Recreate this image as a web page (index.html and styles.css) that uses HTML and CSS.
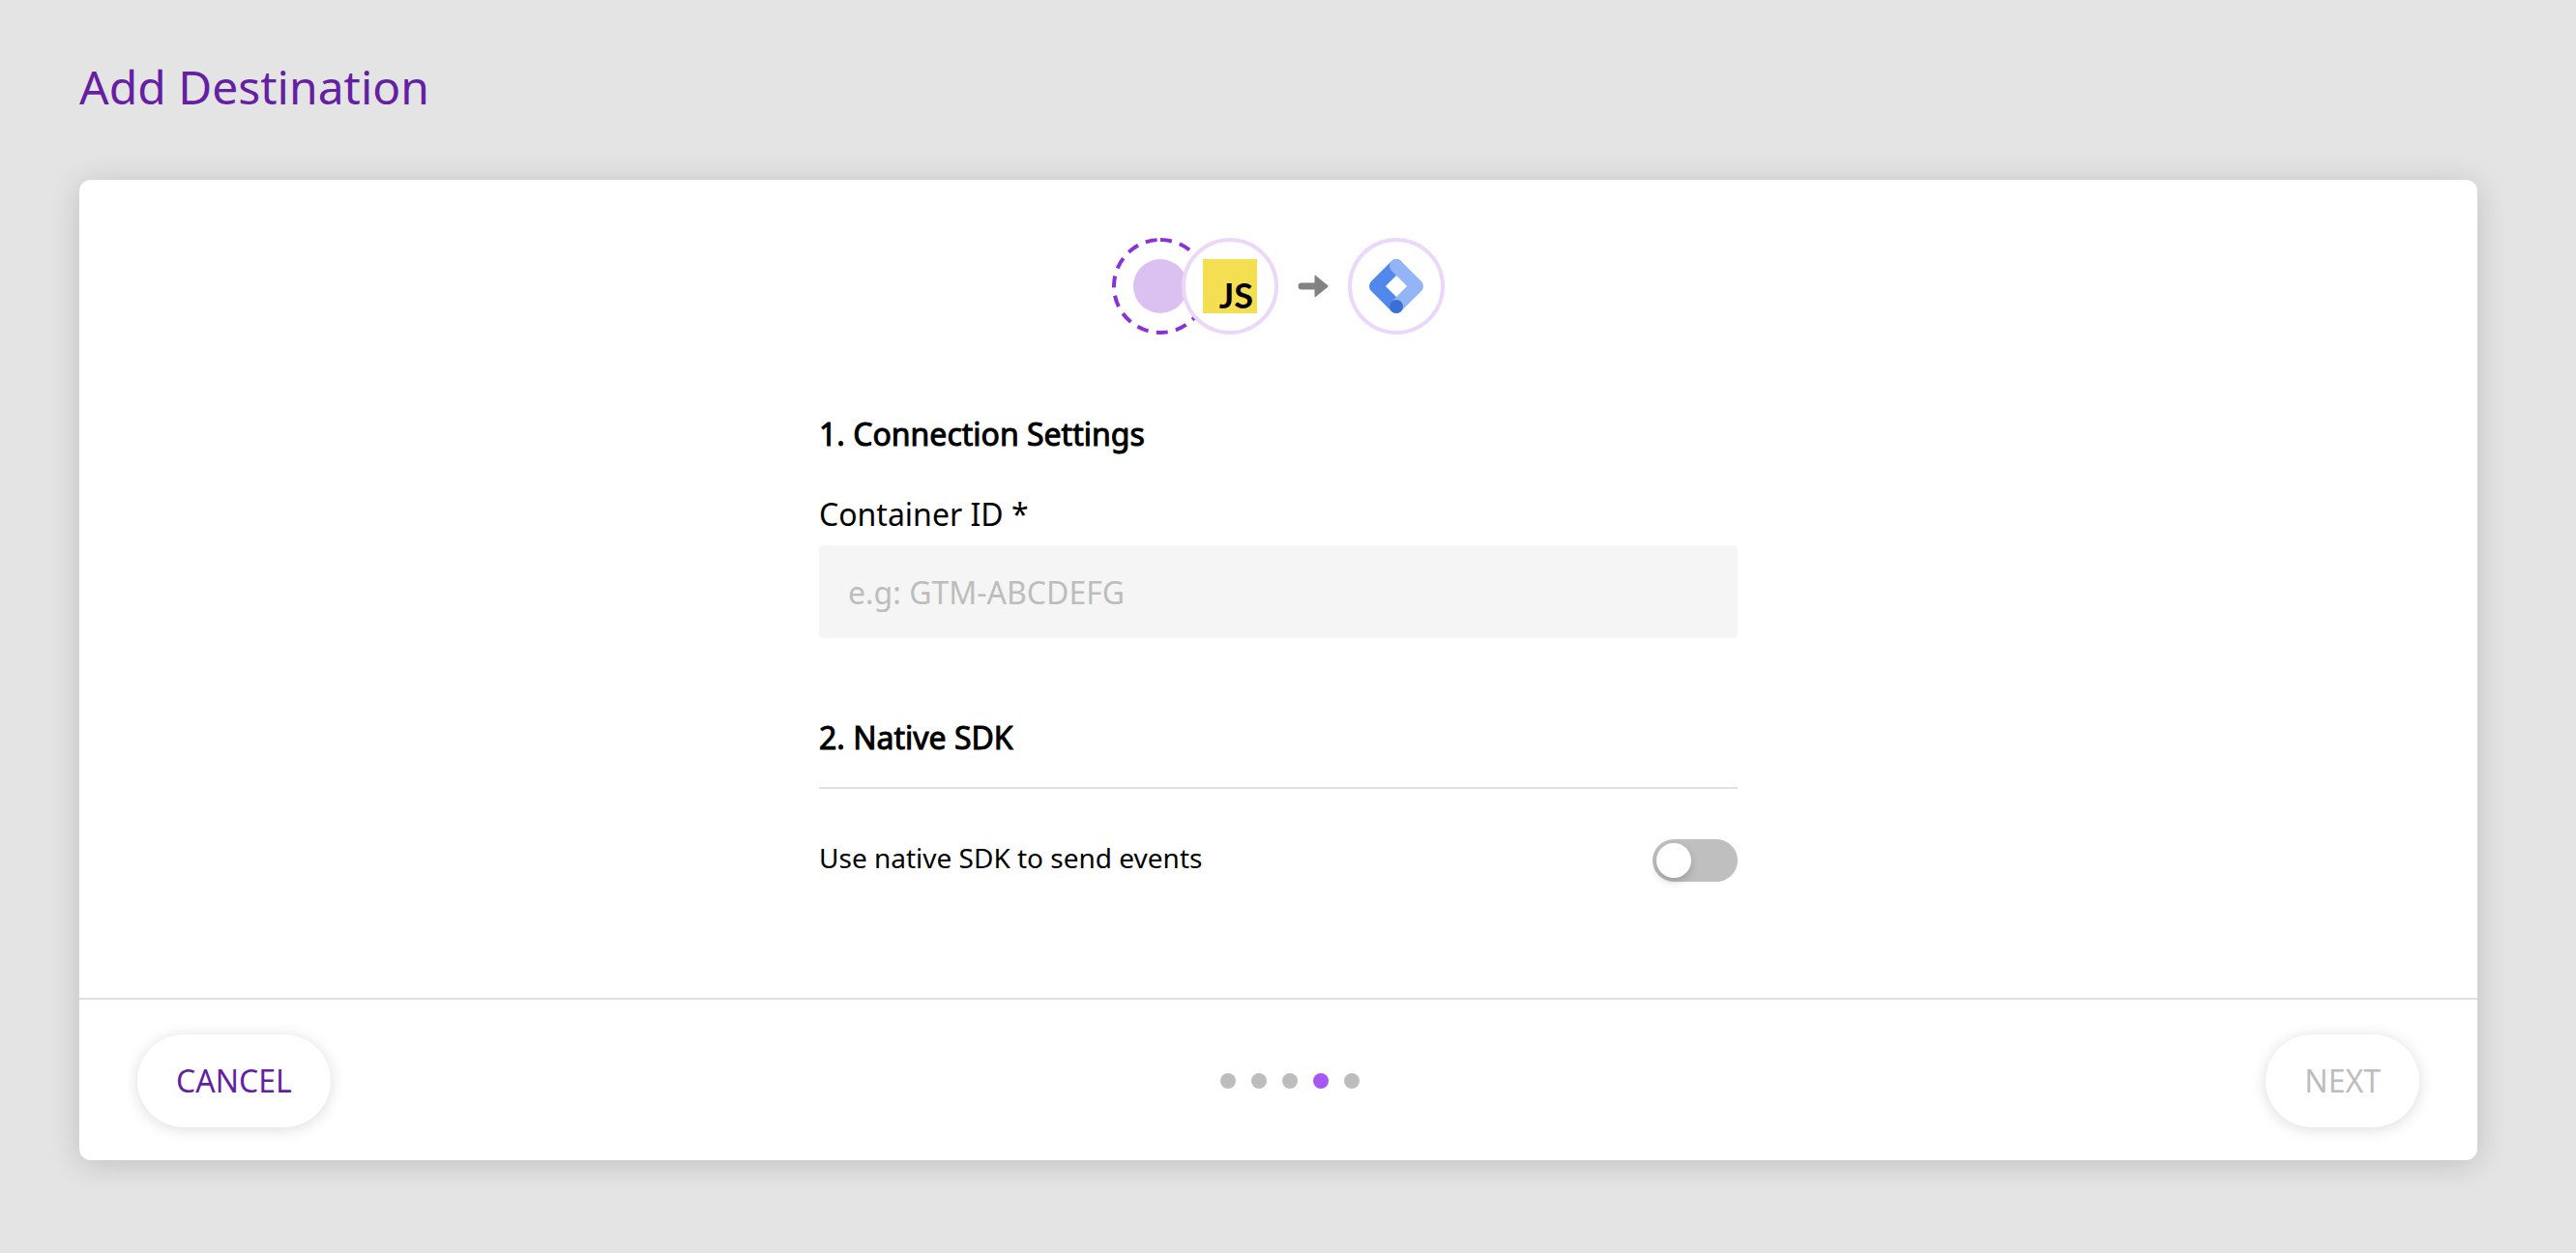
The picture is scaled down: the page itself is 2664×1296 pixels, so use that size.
FILE: index.html
```html
<!DOCTYPE html>
<html lang="en">
<head>
<meta charset="utf-8">
<meta name="viewport" content="width=device-width, initial-scale=1">
<title>Add Destination</title>
<link rel="stylesheet" href="styles.css">
</head>
<body>
<main class="page">
  <h1 class="page-title">Add Destination</h1>
  <form class="card">
    <div class="card-body">
      <div class="flow">
        <svg class="badge-pending" viewBox="0 0 100 100" aria-hidden="true">
          <circle cx="50" cy="50" r="48" fill="none" stroke="#8a32d8" stroke-width="4" stroke-dasharray="12 8.400" transform="rotate(-90 50 50)"/>
          <circle cx="50" cy="50" r="28" fill="#dbc1f1"/>
        </svg>
        <span class="badge badge-source">
          <svg class="logo" viewBox="0 0 56 56" role="img" aria-label="JavaScript">
            <rect width="56" height="56" fill="#f4de51"/>
            <text class="js-text" x="52" y="51" text-anchor="end">JS</text>
          </svg>
        </span>
        <svg class="arrow" viewBox="0 0 32 24" aria-hidden="true">
          <path d="M4 8.500H17.500V1.500Q17.500 0 18.700 1L31.300 11.200Q32 12 31.300 12.800L18.700 23Q17.500 24 17.500 22.500V15.500H4A3.500 3.500 0 0 1 4 8.500Z" fill="#828282"/>
        </svg>
        <span class="badge">
          <svg class="logo" viewBox="0 0 56 56" role="img" aria-label="Google Tag Manager">
            <g fill="none" stroke-width="14" stroke-linecap="round" stroke-linejoin="round">
              <path d="M28 7 7 28 28 49" stroke="#5088ec"/>
              <path d="M28 7 49 28 28 49" stroke="#93b5f5"/>
            </g>
            <circle cx="28" cy="49" r="7" fill="#3a70d6"/>
          </svg>
        </span>
      </div>

      <div class="settings">
        <h2 class="section-title">1. Connection Settings</h2>
        <label class="field-label" for="container-id">Container ID *</label>
        <input class="field-input" id="container-id" type="text" placeholder="e.g: GTM-ABCDEFG">

        <h2 class="section-title section-title-ruled">2. Native SDK</h2>
        <div class="toggle-row">
          <label class="toggle-label" for="native-sdk">Use native SDK to send events</label>
          <input class="toggle" id="native-sdk" type="checkbox" role="switch">
        </div>
      </div>
    </div>

    <footer class="card-footer">
      <button class="button" type="button">CANCEL</button>
      <ol class="steps" aria-label="Step 4 of 5">
        <li class="step"></li>
        <li class="step"></li>
        <li class="step"></li>
        <li class="step step-current" aria-current="step"></li>
        <li class="step"></li>
      </ol>
      <button class="button" type="submit" disabled>NEXT</button>
    </footer>
  </form>
</main>
</body>
</html>
```
FILE: styles.css
```css
* {
  box-sizing: border-box;
}

body {
  margin: 0;
  background: #e4e4e4;
  color: #000;
  font: 32px/44px "Noto Sans", sans-serif;
}

.page {
  padding: 58px 102px 96px 82px;
}

.page-title {
  margin: 0 0 64px;
  color: #641fa3;
  font-size: 48px;
  line-height: 64px;
  font-weight: 400;
}

.card {
  background: #fff;
  border-radius: 12px;
  box-shadow: 0 4px 32px rgba(0, 0, 0, 0.16);
}

.card-body {
  padding: 60px 60px 120px;
}

/* Source to destination */
.flow {
  display: flex;
  justify-content: center;
  align-items: center;
}

.badge,
.badge-pending {
  width: 100px;
  height: 100px;
}

.badge {
  display: flex;
  align-items: center;
  justify-content: center;
  border: 4px solid #ead7fb;
  border-radius: 50%;
  background: #fff;
}

.badge-source {
  z-index: 1;
  margin-left: -28px;
}

.logo {
  width: 56px;
  height: 56px;
  overflow: visible;
}

.js-text {
  font: 700 36px "Lato", sans-serif;
}

.arrow {
  width: 32px;
  height: 24px;
  margin: 0 20px;
}

/* Form */
.settings {
  max-width: 950px;
  margin: 81px auto 0;
}

.section-title {
  margin: 0;
  font-size: 32px;
  line-height: 44px;
  font-weight: 400;
  -webkit-text-stroke: 1px #000;
}

.section-title-ruled {
  margin-top: 81px;
  padding-bottom: 29px;
  border-bottom: 2px solid #e0e0e0;
}

.field-label {
  display: block;
  margin: 39px 0 10px;
}

.field-input {
  display: block;
  width: 100%;
  height: 96px;
  padding: 0 28px;
  border: 2px solid #f5f5f5;
  border-radius: 4px;
  background: #f5f5f5;
  color: #000;
  font: inherit;
}

.field-input::placeholder {
  color: #bdbdbd;
}

.toggle-row {
  display: flex;
  justify-content: space-between;
  align-items: flex-start;
  margin-top: 52px;
}

.toggle-label {
  font-size: 28px;
  line-height: 38px;
}

.toggle {
  appearance: none;
  width: 88px;
  height: 44px;
  margin: 0;
  padding: 4px;
  border-radius: 22px;
  background: #bfbfbf;
}

.toggle::before {
  content: "";
  display: block;
  width: 36px;
  height: 36px;
  border-radius: 50%;
  background: #fff;
  box-shadow: 0 4px 8px rgba(0, 35, 11, 0.2);
}

.toggle:checked {
  background: #a855f2;
}

.toggle:checked::before {
  margin-left: auto;
}

/* Footer */
.card-footer {
  display: flex;
  align-items: center;
  justify-content: space-between;
  padding: 36px 60px 34px;
  border-top: 2px solid #e0e0e0;
}

.button {
  height: 96px;
  padding: 0 40px;
  border: 0;
  border-radius: 48px;
  background: #fff;
  box-shadow: 0 2px 16px rgba(0, 0, 0, 0.14);
  color: #641fa3;
  font: inherit;
}

.button:disabled {
  color: #bdbdbd;
}

.steps {
  display: flex;
  gap: 16px;
  margin: 0;
  padding: 0 18px 0 0;
  list-style: none;
}

.step {
  width: 16px;
  height: 16px;
  border-radius: 50%;
  background: #bdbdbd;
}

.step-current {
  background: #a855f2;
}
```
